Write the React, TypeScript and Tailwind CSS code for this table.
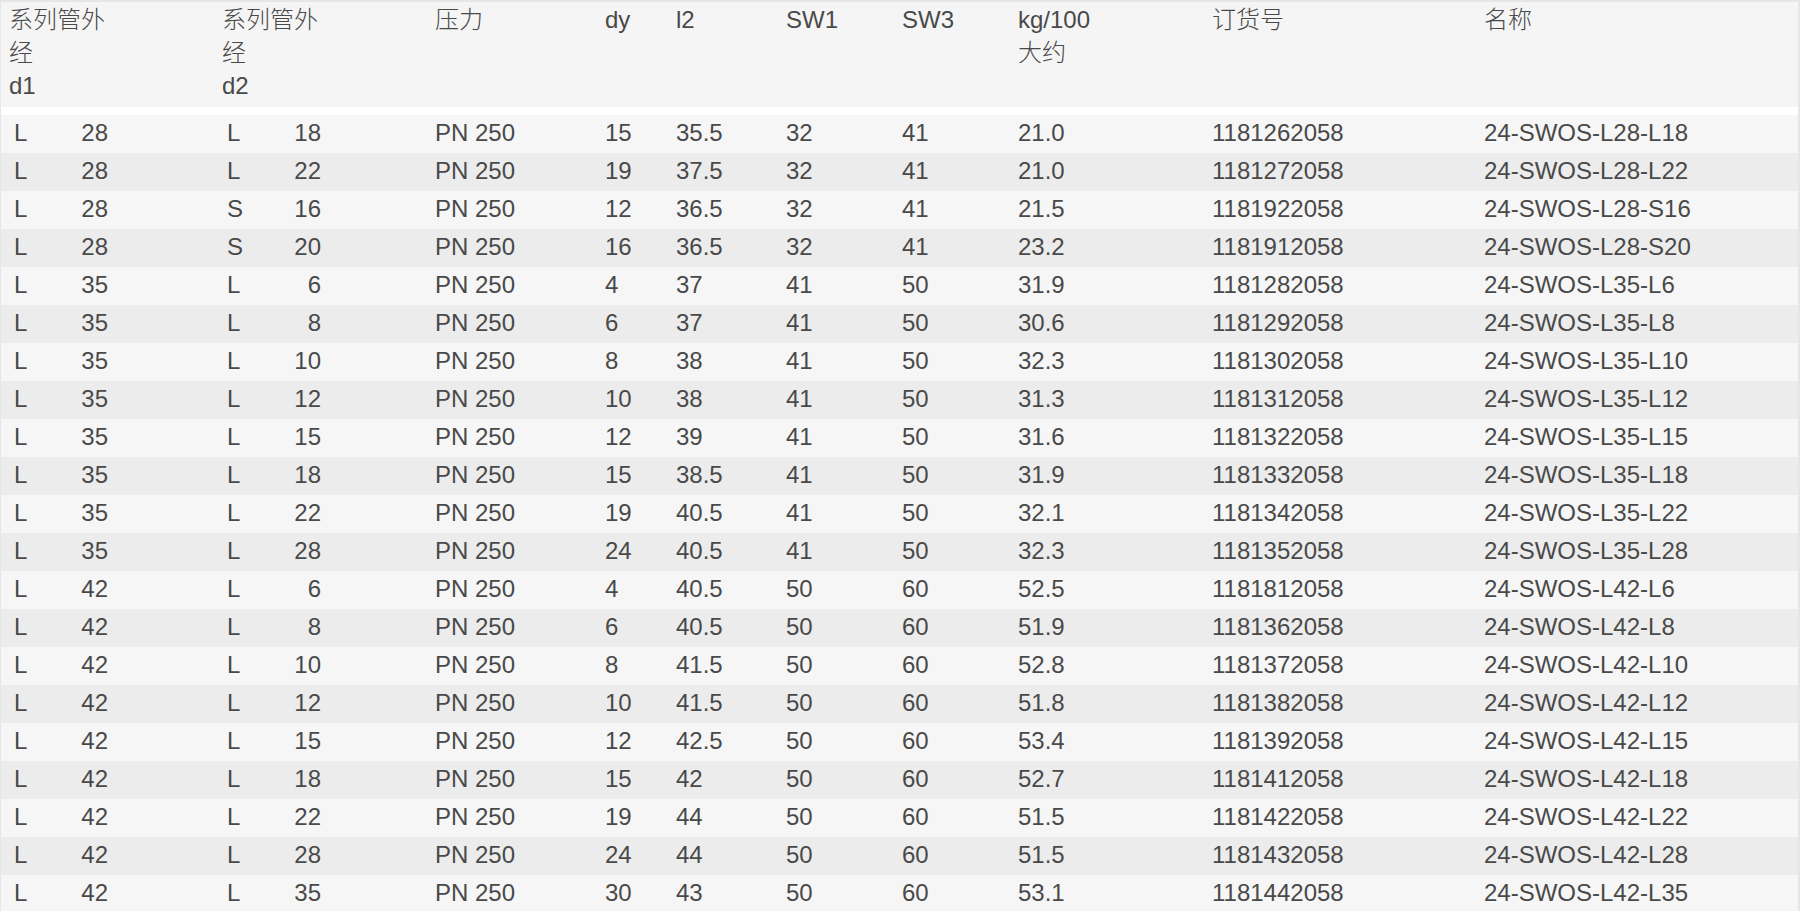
import React from "react";

type Row = {
  a: string;
  an: string;
  b: string;
  bn: string;
  dy: string;
  l2: string;
  sw1: string;
  sw3: string;
  kg: string;
  order: string;
  name: string;
};

const raw: [string, string, string, string, string, string, string, string, string, string][] = [
  ["28", "L", "18", "15", "35.5", "32", "41", "21.0", "1181262058", "24-SWOS-L28-L18"],
  ["28", "L", "22", "19", "37.5", "32", "41", "21.0", "1181272058", "24-SWOS-L28-L22"],
  ["28", "S", "16", "12", "36.5", "32", "41", "21.5", "1181922058", "24-SWOS-L28-S16"],
  ["28", "S", "20", "16", "36.5", "32", "41", "23.2", "1181912058", "24-SWOS-L28-S20"],
  ["35", "L", "6", "4", "37", "41", "50", "31.9", "1181282058", "24-SWOS-L35-L6"],
  ["35", "L", "8", "6", "37", "41", "50", "30.6", "1181292058", "24-SWOS-L35-L8"],
  ["35", "L", "10", "8", "38", "41", "50", "32.3", "1181302058", "24-SWOS-L35-L10"],
  ["35", "L", "12", "10", "38", "41", "50", "31.3", "1181312058", "24-SWOS-L35-L12"],
  ["35", "L", "15", "12", "39", "41", "50", "31.6", "1181322058", "24-SWOS-L35-L15"],
  ["35", "L", "18", "15", "38.5", "41", "50", "31.9", "1181332058", "24-SWOS-L35-L18"],
  ["35", "L", "22", "19", "40.5", "41", "50", "32.1", "1181342058", "24-SWOS-L35-L22"],
  ["35", "L", "28", "24", "40.5", "41", "50", "32.3", "1181352058", "24-SWOS-L35-L28"],
  ["42", "L", "6", "4", "40.5", "50", "60", "52.5", "1181812058", "24-SWOS-L42-L6"],
  ["42", "L", "8", "6", "40.5", "50", "60", "51.9", "1181362058", "24-SWOS-L42-L8"],
  ["42", "L", "10", "8", "41.5", "50", "60", "52.8", "1181372058", "24-SWOS-L42-L10"],
  ["42", "L", "12", "10", "41.5", "50", "60", "51.8", "1181382058", "24-SWOS-L42-L12"],
  ["42", "L", "15", "12", "42.5", "50", "60", "53.4", "1181392058", "24-SWOS-L42-L15"],
  ["42", "L", "18", "15", "42", "50", "60", "52.7", "1181412058", "24-SWOS-L42-L18"],
  ["42", "L", "22", "19", "44", "50", "60", "51.5", "1181422058", "24-SWOS-L42-L22"],
  ["42", "L", "28", "24", "44", "50", "60", "51.5", "1181432058", "24-SWOS-L42-L28"],
  ["42", "L", "35", "30", "43", "50", "60", "53.1", "1181442058", "24-SWOS-L42-L35"],
];

const rows: Row[] = raw.map((r) => ({
  a: "L",
  an: r[0],
  b: r[1],
  bn: r[2],
  dy: r[3],
  l2: r[4],
  sw1: r[5],
  sw3: r[6],
  kg: r[7],
  order: r[8],
  name: r[9],
}));

function Pair({ letter, num }: { letter: string; num: string }) {
  return (
    <div className="flex w-[99px] justify-between pl-[5px]">
      <span>{letter}</span>
      <span className="text-right">{num}</span>
    </div>
  );
}

export default function App() {
  return (
    <div
      className="w-[1800px] h-[911px] overflow-hidden bg-white border-t-2 border-l border-r-2 border-[#e6e6e6] text-[24px] text-[#494949] font-light"
      style={{ fontFamily: '"Liberation Sans", "Noto Sans CJK SC", sans-serif' }}
    >
      <div className="flex bg-[#f5f5f5] pl-[8px] pt-[1px] pb-[5px] leading-[33px]">
        <div className="w-[213px] flex flex-col">
          <span>系列管外</span>
          <span>经</span>
          <span>d1</span>
        </div>
        <div className="w-[213px] flex flex-col">
          <span>系列管外</span>
          <span>经</span>
          <span>d2</span>
        </div>
        <div className="w-[170px]">压力</div>
        <div className="w-[71px]">dy</div>
        <div className="w-[110px]">l2</div>
        <div className="w-[116px]">SW1</div>
        <div className="w-[116px]">SW3</div>
        <div className="w-[194px] flex flex-col">
          <span>kg/100</span>
          <span>大约</span>
        </div>
        <div className="w-[272px]">订货号</div>
        <div className="flex-1">名称</div>
      </div>
      <div className="h-[8px] bg-white" />
      <div className="flex flex-col">
        {rows.map((r, i) => (
          <div
            key={i}
            className={
              "flex h-[38px] items-center pl-[8px] pb-[2px] leading-[36px] " +
              (i % 2 === 0 ? "bg-[#f6f6f6]" : "bg-[#ececec]")
            }
          >
            <div className="w-[213px]">
              <Pair letter={r.a} num={r.an} />
            </div>
            <div className="w-[213px]">
              <Pair letter={r.b} num={r.bn} />
            </div>
            <div className="w-[170px]">PN 250</div>
            <div className="w-[71px]">{r.dy}</div>
            <div className="w-[110px]">{r.l2}</div>
            <div className="w-[116px]">{r.sw1}</div>
            <div className="w-[116px]">{r.sw3}</div>
            <div className="w-[194px]">{r.kg}</div>
            <div className="w-[272px]">{r.order}</div>
            <div className="flex-1">{r.name}</div>
          </div>
        ))}
      </div>
    </div>
  );
}
